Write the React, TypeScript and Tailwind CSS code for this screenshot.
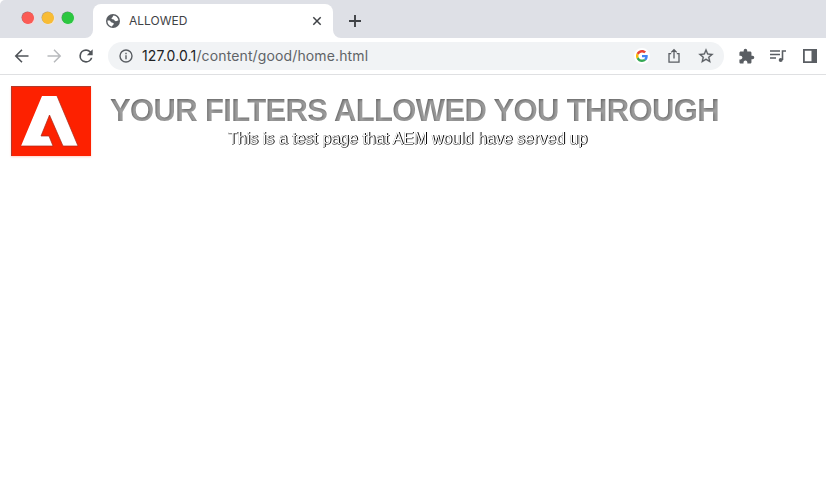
import React from "react";

function Globe() {
  return (
    <svg viewBox="0 0 16 16" className="h-[16px] w-[16px] shrink-0">
      <circle cx="8" cy="8" r="7" fill="#5a5e63" />
      <path d="M8.7 2.5C7.2 3 8.4 4 7.2 4.6C6 5 6.5 6.6 7.8 6.3C9 6.2 9.2 7.1 9.8 7.8C10.8 8.7 12.7 7.7 13.5 7.2C12.8 4.7 11.2 3 8.7 2.5ZM2.5 7.5C2.3 10.6 4.2 13 7 13.5C7.2 12.2 8.8 12 8.8 10.8C8.8 9.6 7.4 9.8 6.6 9.5C5.5 9.2 5.6 7.7 4.3 7.5Z" fill="#fff" />
    </svg>
  );
}

function Toolbar() {
  return (
    <div className="flex h-[37px] items-center border-b border-[#dfe0e2] bg-white pl-[13px] text-[#5a5e63]">
      <svg viewBox="0 0 18 18" className="h-[18px] w-[18px] shrink-0" fill="none" stroke="#505459" strokeWidth="1.6"><path d="M15.5 9H3M9 2.8L2.8 9L9 15.2" /></svg>
      <svg viewBox="0 0 18 18" className="ml-[14px] h-[18px] w-[18px] shrink-0" fill="none" stroke="#b8babd" strokeWidth="1.5"><path d="M2.5 9H15M9 2.8L15.2 9L9 15.2" /></svg>
      <svg viewBox="0 0 24 24" className="ml-[13px] h-[20px] w-[20px] shrink-0" fill="#505459"><path d="M17.65 6.35A7.96 7.96 0 0 0 12 4a8 8 0 1 0 7.73 10h-2.08A6 6 0 1 1 12 6c1.66 0 3.14.69 4.22 1.78L13 11h7V4z" /></svg>
      <div className="ml-[12px] flex h-[28px] w-[616px] shrink-0 items-center rounded-full bg-[#f1f3f5] pl-[11px]">
        <svg viewBox="0 0 14 14" className="h-[14px] w-[14px] shrink-0" fill="none" stroke="#5a5e63" strokeWidth="1.4"><circle cx="7" cy="7" r="6" /><path d="M7 6.2V10.2M7 3.8V5.2" /></svg>
        <span className="ml-[9px] w-[488px] whitespace-nowrap text-[14px] leading-[20px] tracking-[0.13px] text-[#606367]"><span className="text-[#202124]">127.0.0.1</span>/content/good/home.html</span>
        <div className="ml-[4px] flex h-[16px] w-[16px] shrink-0 items-center justify-center rounded-full bg-white">
          <svg viewBox="0 0 48 48" className="h-[12px] w-[12px]">
            <path fill="#EA4335" d="M24 9.5c3.54 0 6.71 1.22 9.21 3.6l6.85-6.85C35.9 2.38 30.47 0 24 0 14.62 0 6.51 5.38 2.56 13.22l7.98 6.19C12.43 13.72 17.74 9.5 24 9.5z" />
            <path fill="#4285F4" d="M46.98 24.55c0-1.57-.15-3.09-.38-4.55H24v9.02h12.94c-.58 2.96-2.26 5.48-4.78 7.18l7.73 6c4.51-4.18 7.09-10.36 7.09-17.65z" />
            <path fill="#FBBC05" d="M10.53 28.59a14.5 14.5 0 0 1 0-9.18l-7.98-6.19a24 24 0 0 0 0 21.56z" />
            <path fill="#34A853" d="M24 48c6.48 0 11.93-2.13 15.89-5.81l-7.73-6c-2.15 1.45-4.92 2.3-8.16 2.3-6.26 0-11.57-4.22-13.47-9.91l-7.98 6.19C6.51 42.62 14.62 48 24 48z" />
          </svg>
        </div>
        <svg viewBox="0 0 16 16" className="ml-[16px] h-[16px] w-[16px] shrink-0" fill="none" stroke="#5a5e63" strokeWidth="1.3"><path d="M5.2 5.7H3V14.2H13V5.7H10.8M8 10.5V1.8M5.3 4.4L8 1.7L10.7 4.4" /></svg>
        <svg viewBox="0 0 24 24" className="ml-[15px] h-[18px] w-[18px] shrink-0" fill="#5a5e63" stroke="#5a5e63" strokeWidth="0.3"><path d="M22 9.24l-7.19-.62L12 2 9.19 8.63 2 9.24l5.46 4.73L5.82 21 12 17.27 18.18 21l-1.63-7.03L22 9.24zM12 15.4l-3.76 2.27 1-4.28-3.32-2.88 4.38-.38L12 6.1l1.71 4.04 4.38.38-3.32 2.88 1 4.28L12 15.4z" /></svg>
      </div>
      <svg viewBox="0 0 24 24" className="ml-[14px] h-[17px] w-[17px] shrink-0" fill="#5a5e63"><path d="M20.5 11H19V7c0-1.1-.9-2-2-2h-4V3.500a2.500 2.500 0 0 0-5 0V5H4c-1.100 0-1.990.9-1.990 2v3.800H3.500c1.490 0 2.700 1.210 2.700 2.700s-1.210 2.700-2.700 2.700H2V20c0 1.100.9 2 2 2h3.800v-1.500c0-1.490 1.210-2.700 2.700-2.700s2.700 1.210 2.700 2.700V22H17c1.100 0 2-.9 2-2v-4h1.500a2.500 2.500 0 0 0 0-5z" /></svg>
      <svg viewBox="0 0 18 18" className="ml-[14px] h-[18px] w-[18px] shrink-0" fill="none" stroke="#5a5e63" strokeWidth="1.6"><path d="M1 4H11M1 7.500H11M1 11H7M13.500 13V4H17" /><circle cx="11.700" cy="13" r="2" fill="#5a5e63" stroke="none" /></svg>
      <svg viewBox="0 0 16 16" className="ml-[15px] h-[16px] w-[16px] shrink-0"><path fill="#5a5e63" fillRule="evenodd" d="M1 1H15V15H1ZM2.800 2.800V13.200H9.500V2.800Z" /></svg>
    </div>
  );
}

export default function App() {
  return (
    <div className="flex h-[492px] w-[826px] flex-col overflow-hidden rounded-tl-[5px] rounded-b-[5px] bg-white font-['Inter',sans-serif]">
      <div className="flex h-[38px] shrink-0 bg-[#dee0e6]">
        <div className="flex w-[85px] shrink-0 gap-[8px] pl-[21.5px] pt-[12px]">
          <div className="h-[12px] w-[12px] rounded-full bg-[#fb5b55] shadow-[-0.5px_-0.5px_0_#a76a70,1px_1px_1px_#f2d7dc]" />
          <div className="h-[12px] w-[12px] rounded-full bg-[#f8bc35] shadow-[-0.5px_-0.5px_0_#b5a07c,1px_1px_1px_#eee5d8]" />
          <div className="h-[12px] w-[12px] rounded-full bg-[#2bc740] shadow-[-0.5px_-0.5px_0_#569568,1px_1px_1px_#d1e9d9]" />
        </div>
        <div className="w-[8px] bg-white"><div className="h-full rounded-br-[8px] bg-[#dee0e6]" /></div>
        <div className="w-[240px] shrink-0 pt-[4px]">
          <div className="flex h-[34px] items-center rounded-t-[8px] bg-white pl-[12px] pr-[11px]">
            <Globe />
            <span className="ml-[8px] grow text-[12px] leading-[16px] text-[#3f4246]">ALLOWED</span>
            <svg viewBox="0 0 10 10" className="h-[10px] w-[10px]" stroke="#3f4246" strokeWidth="1.500"><path d="M1.300 1.300L8.700 8.700M8.700 1.300L1.300 8.700" /></svg>
          </div>
        </div>
        <div className="w-[8px] bg-white"><div className="h-full rounded-bl-[8px] bg-[#dee0e6]" /></div>
        <svg viewBox="0 0 14 14" className="ml-[7px] mt-[14px] h-[14px] w-[14px]" stroke="#3f4246" strokeWidth="1.900"><path d="M7 1V13M1 7H13" /></svg>
      </div>
      <Toolbar />
      <main className="flex pl-[11px] pt-[11px] font-['Liberation_Sans',Arial,sans-serif]">
        <svg viewBox="0 0 80 70" className="h-[70px] w-[80px] shrink-0 shadow-[0_1px_2px_#ffd0c8]">
          <path fill="#fd2100" d="M0 0H80V70H0Z" />
          <path fill="none" stroke="#b03a2c" d="M0.500 70V0.500H80" />
          <path fill="#fff" d="M31 10H46L67 60H52L38.500 29L30 50H38L42 60H10Z" />
          <path fill="none" stroke="#a62a1a" strokeWidth="0.700" d="M46 10L67 60H52L38.500 29L30 50H38L42 60H10" />
        </svg>
        <div className="ml-[19px] flex flex-col pt-[8px]">
          <h1 className="whitespace-nowrap bg-[#606060] bg-clip-text text-[31px] font-bold leading-[34px] tracking-[-0.65px] text-transparent [text-shadow:1px_1px_3px_rgba(255,255,255,0.42)]">YOUR FILTERS ALLOWED YOU THROUGH</h1>
          <p className="ml-[118px] mt-[1px] whitespace-nowrap text-[16px] leading-[20px] text-white opacity-[0.99] [text-shadow:1px_0_0_#000,0_1px_0_#777,0_-0.5px_0_#777]">This is a test page that AEM would have served up</p>
        </div>
      </main>
    </div>
  );
}
